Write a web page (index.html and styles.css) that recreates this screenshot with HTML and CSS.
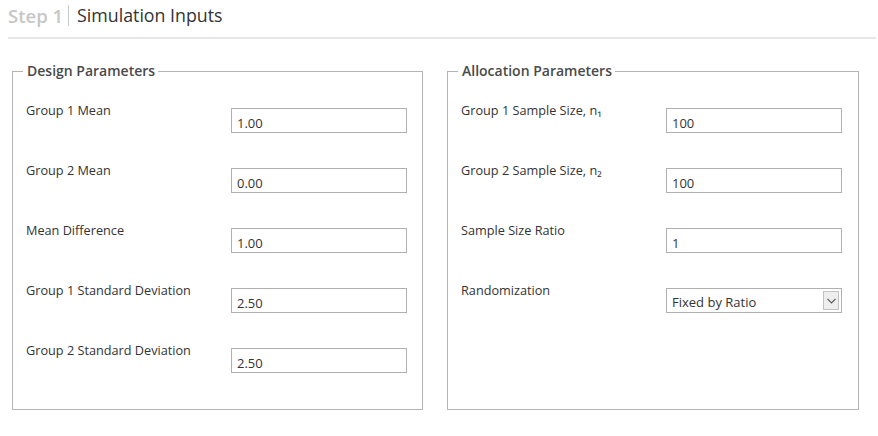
FILE: index.html
```html
<!DOCTYPE html>
<html>
<head>
<meta charset="utf-8">
<link rel="stylesheet" href="styles.css">
</head>
<body>
<div class="header">
  <span class="step">Step 1</span>
  <span class="sep"></span>
  <span class="title">Simulation Inputs</span>
</div>
<div class="rule"></div>
<div class="panels">
  <fieldset class="panel panel-left">
    <legend>Design Parameters</legend>
    <div class="form">
      <label class="lbl">Group 1 Mean</label><input class="box" value="1.00">
      <label class="lbl">Group 2 Mean</label><input class="box" value="0.00">
      <label class="lbl">Mean Difference</label><input class="box" value="1.00">
      <label class="lbl">Group 1 Standard Deviation</label><input class="box" value="2.50">
      <label class="lbl">Group 2 Standard Deviation</label><input class="box" value="2.50">
    </div>
  </fieldset>
  <fieldset class="panel panel-right">
    <legend>Allocation Parameters</legend>
    <div class="form">
      <label class="lbl">Group 1 Sample Size, n₁</label><input class="box" value="100">
      <label class="lbl">Group 2 Sample Size, n₂</label><input class="box" value="100">
      <label class="lbl">Sample Size Ratio</label><input class="box" value="1">
      <label class="lbl">Randomization</label>
      <div class="box select">
        <span class="sel-value">Fixed by Ratio</span>
        <span class="sel-btn"><svg width="9" height="6" viewBox="0 0 9 6"><path d="M0.5 0.8 L4.5 4.8 L8.5 0.8" fill="none" stroke="#5a5a5a" stroke-width="1.2"/></svg></span>
      </div>
    </div>
  </fieldset>
</div>
</body>
</html>
```
FILE: styles.css
```css
html, body {
  margin: 0;
  padding: 0;
  background: #ffffff;
}
body {
  font-family: "Open Sans", "Noto Sans", sans-serif;
  color: #333333;
  width: 878px;
  height: 436px;
  overflow: hidden;
}
.header {
  display: flex;
  align-items: center;
  height: 30px;
  padding-left: 8px;
}
.step {
  font-size: 18.5px;
  font-weight: 600;
  color: #c6c6c6;
}
.sep {
  width: 1px;
  height: 21px;
  background: #c8c8c8;
  margin: 0 8px 0 5px;
}
.title {
  font-size: 17.8px;
  color: #333333;
}
.rule {
  margin: 7px 2px 0 8px;
  height: 2px;
  background: #e6e6e6;
}
.panels {
  display: flex;
  gap: 24px;
  padding: 23px 0 0 12px;
}
.panel {
  margin: 0;
  padding: 0 0 7px 0;
  border: 1px solid #b4b4b4;
  box-sizing: border-box;
  min-width: 0;
}
.panel-left { width: 411px; }
.panel-right { width: 412px; }
legend {
  margin-left: 10px;
  padding: 0 3px 0 4px;
  font-size: 14px;
  font-weight: 600;
  color: #4a4a4a;
  line-height: 18px;
}
.form {
  display: grid;
  grid-template-columns: 205px 176px;
  grid-auto-rows: 60px;
  padding: 22px 0 0 13px;
}
.lbl {
  font-size: 12.7px;
  line-height: 16px;
  color: #333333;
  white-space: nowrap;
}
.box {
  box-sizing: border-box;
  width: 176px;
  height: 25px;
  margin: 6px 0 0 0;
  border: 1px solid #b0b0b0;
  background: #ffffff;
  font-family: "Open Sans", "Noto Sans", sans-serif;
  font-size: 13px;
  color: #333333;
  padding: 4px 0 0 5px;
  outline: none;
}
.select {
  display: flex;
  align-items: center;
  justify-content: space-between;
  padding: 0 2px 0 5px;
}
.sel-value {
  padding-top: 2px;
}
.sel-btn {
  width: 16px;
  height: 19px;
  box-sizing: border-box;
  border: 1px solid #c2c2c2;
  background: #eeeeee;
  display: flex;
  align-items: center;
  justify-content: center;
}
```
